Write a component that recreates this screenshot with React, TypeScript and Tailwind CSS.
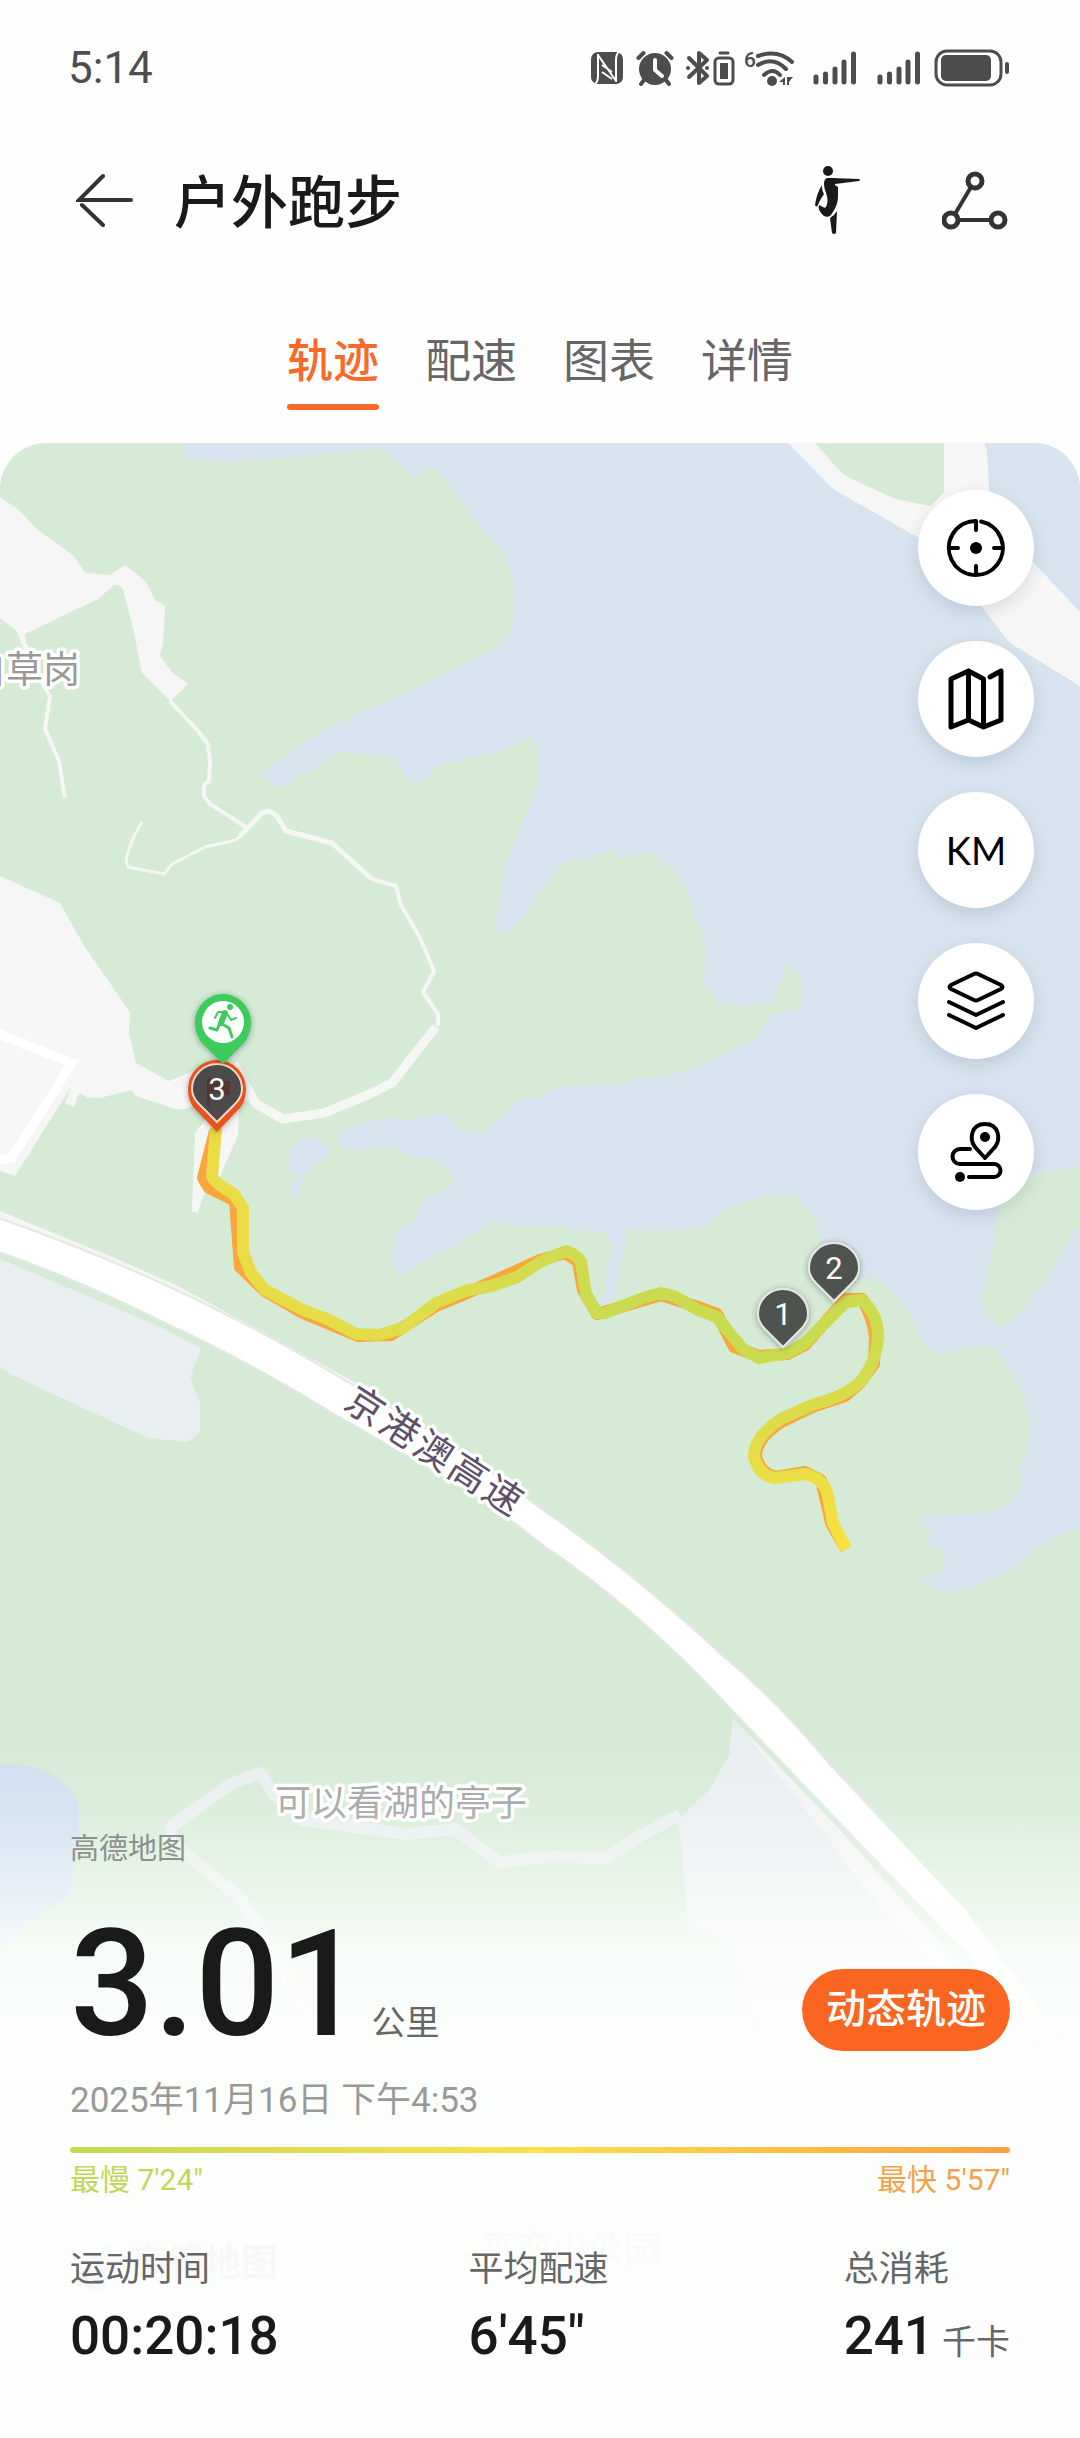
import { useState } from "react";

const tabs = ["轨迹", "配速", "图表", "详情"];

const stats = [
  { label: "运动时间", value: "00:20:18", unit: "" },
  { label: "平均配速", value: "6'45\"", unit: "" },
  { label: "总消耗", value: "241", unit: "千卡" },
];

function StatusBar() {
  return (
    <div className="flex h-12 items-center justify-between pl-[68px] pr-[70px] text-[#4d4d4d]">
      <span className="text-[44px] leading-[48px]">5:14</span>

      <div className="flex items-center">
        {/* NFC */}
        <svg className="mr-3 h-9 w-[34px]" viewBox="0 0 34 36">
          <rect x="1" y="2" width="32" height="32" rx="7" fill="currentColor" />
          <path
            d="M8 5L26 31M8 4V26Q8 32 5 34M26 32V10Q26 4 29 2"
            fill="none"
            stroke="#fff"
            strokeWidth="2"
          />
          <path d="M12 15L22 22M12 22L22 29" stroke="#fff" strokeWidth="2" />
        </svg>

        {/* Alarm */}
        <svg className="mr-3 h-9 w-[38px]" viewBox="0 0 38 36">
          <circle cx="19" cy="19" r="16" fill="currentColor" />
          <path
            d="M2.500 8l5-5M35.500 8l-5-5M8 30l-3 4M30 30l3 4"
            stroke="currentColor"
            strokeWidth="4"
            strokeLinecap="round"
          />
          <path
            d="M19 10v10l7 6"
            fill="none"
            stroke="#fff"
            strokeWidth="4"
            strokeLinecap="round"
            strokeLinejoin="round"
          />
        </svg>

        {/* Bluetooth with the headset's battery */}
        <svg className="mr-2 h-9 w-[50px]" viewBox="0 0 50 36">
          <path
            d="M3 8l18 18-8 7V3l8 7L3 27"
            fill="none"
            stroke="currentColor"
            strokeWidth="4"
            strokeLinecap="round"
            strokeLinejoin="round"
          />
          <circle cx="2" cy="18" r="2" fill="currentColor" />
          <circle cx="21" cy="18" r="2" fill="currentColor" />
          <path d="M34 3h8" stroke="currentColor" strokeWidth="3" strokeLinecap="round" />
          <rect
            x="29"
            y="8"
            width="18"
            height="26"
            rx="4"
            fill="none"
            stroke="currentColor"
            strokeWidth="3"
          />
          <rect x="34" y="13" width="8" height="16" fill="currentColor" />
        </svg>

        {/* Wi-Fi 6 */}
        <svg className="mr-4 h-9 w-[52px] overflow-visible" viewBox="0 0 52 36">
          <text x="0" y="17" fontSize="21" fontWeight="500" fill="currentColor">
            6
          </text>
          <path
            d="M14 6q20-7 34 6M14 15q15-9 28 4M20 25q9-8 16 0"
            fill="none"
            stroke="currentColor"
            strokeWidth="4"
            strokeLinecap="round"
          />
          <circle cx="28" cy="31" r="5" fill="currentColor" />
          <path d="M41 27v8h-2v-3h-4zM43 35v-8h6l-4 5v3z" fill="currentColor" />
        </svg>

        <div className="flex gap-[18px]">
          <SignalIcon />
          <SignalIcon />
        </div>

        {/* Battery */}
        <svg className="ml-3 h-[38px] w-[76px]" viewBox="0 0 76 38">
          <rect
            x="2"
            y="2"
            width="65"
            height="34"
            rx="11"
            fill="none"
            stroke="currentColor"
            strokeWidth="3"
          />
          <rect x="7" y="6" width="50" height="26" rx="5" fill="currentColor" />
          <rect x="71" y="13" width="4" height="12" rx="2" fill="currentColor" />
        </svg>
      </div>
    </div>
  );
}

function SignalIcon() {
  return (
    <svg className="h-9 w-[46px]" viewBox="0 0 46 36">
      <path
        d="M4 27v5M13.500 24v8M23 19v13M32 12v20M41.500 4v28"
        stroke="currentColor"
        strokeWidth="5"
        strokeLinecap="round"
      />
    </svg>
  );
}

function StretchIcon() {
  return (
    <svg className="h-[70px] w-12" viewBox="0 0 48 70" fill="currentColor">
      <circle cx="14" cy="6" r="5" />
      <path d="M14 13h4l27 1q2 1 0 2l-24 3v1l3 2v9c0 8-3 13-7 19-3 3-7 2-9-1-3-3-4-6-3-9l4 2c1 1 2 1 3 0 3-6 1-12-1-17-2-7-1-12 3-12z" />
      <path d="M8 20c-4 6-6 13-7 20 1 2 2 2 3 0 2-5 4-8 6-11-2-3-2-6-2-9z" />
      <path d="M23 46l-1 22q-2 2-4 0l-2-15q4-2 7-7z" />
    </svg>
  );
}

function RouteShareIcon() {
  return (
    <svg
      className="h-[60px] w-[66px]"
      viewBox="0 0 66 60"
      fill="none"
      stroke="currentColor"
      strokeWidth="5"
    >
      <circle cx="33" cy="11" r="7" />
      <circle cx="9" cy="50" r="7" />
      <circle cx="56" cy="50" r="7" />
      <path d="M29 17L13 44M16 50h33" strokeWidth="4" />
    </svg>
  );
}

/* Small number pin, tip at the bottom of the drop */
function KmPin({ x, y, label }: { x: number; y: number; label: string }) {
  return (
    <g transform={`translate(${x} ${y})`}>
      <path
        d="M0 33L-18 15C-24 9-25 4-25 0A25 25 0 0 1 25 0C25 4 24 9 18 15Z"
        fill="#505250"
        stroke="#e6e6e6"
        strokeWidth="2"
        filter="url(#pinShadow)"
      />
      <text y="11" textAnchor="middle" fontSize="31" fill="#fff">
        {label}
      </text>
    </g>
  );
}

function TrackMap() {
  return (
    <svg
      className="absolute inset-0 h-full w-full"
      viewBox="0 443 1080 1995"
      preserveAspectRatio="xMidYMin slice"
      role="img"
      aria-label="轨迹"
    >
      <defs>
        <linearGradient id="trackOut" gradientUnits="userSpaceOnUse" x1="212" y1="0" x2="870" y2="0">
          <stop offset="0" stopColor="#ebdc44" />
          <stop offset="0.35" stopColor="#dedc4c" />
          <stop offset="0.6" stopColor="#cbdb50" />
          <stop offset="1" stopColor="#cbdb50" />
        </linearGradient>
        <linearGradient id="trackEnd" gradientUnits="userSpaceOnUse" x1="0" y1="1300" x2="0" y2="1549">
          <stop offset="0" stopColor="#cbdb50" />
          <stop offset="0.45" stopColor="#dcdb4a" />
          <stop offset="1" stopColor="#fbe040" />
        </linearGradient>
        <linearGradient id="fade" gradientUnits="userSpaceOnUse" x1="0" y1="1740" x2="0" y2="2438">
          <stop offset="0" stopColor="#fdfffd" stopOpacity="0" />
          <stop offset="0.1" stopColor="#fdfffd" stopOpacity="0.15" />
          <stop offset="0.2" stopColor="#fdfffd" stopOpacity="0.48" />
          <stop offset="0.3" stopColor="#fdfffd" stopOpacity="0.82" />
          <stop offset="0.4" stopColor="#fdfffd" stopOpacity="0.93" />
          <stop offset="0.9" stopColor="#fefefe" stopOpacity="0.97" />
          <stop offset="1" stopColor="#fefefe" stopOpacity="1" />
        </linearGradient>
        <filter id="pinShadow" x="-30%" y="-30%" width="160%" height="160%">
          <feDropShadow dx="0" dy="1" stdDeviation="3" floodOpacity="0.35" />
        </filter>
      </defs>

      <rect y="443" width="1080" height="1995" fill="#d5ebd6" />

      {/* Lake */}
      <path
        fill="#d7e3ee"
        d="M183 443V457L220 462L248 461L310 456L377 448L387 453L415 479Q424 466 430 466Q438 470 448 482L475 521L501 549L507 562Q514 580 514 600L512 629L494 649L465 664L406 693L362 712L339 722L300 745L286 758L267 767L263 777L272 784L289 787L294 778L310 771L332 755L343 752L393 757L399 763L406 779L415 783L425 780L437 766L461 760L499 752L530 737L537 746L538 777L534 796L520 827L506 865L499 899L495 932L508 931L520 922L540 894L554 872L566 861L585 859L614 850L619 858L648 853Q668 860 688 890L692 909L705 941L706 957L703 980L719 1004L750 1006L772 1001Q784 980 786 964L802 975V1008L772 1014L755 1040L726 1053L695 1067L671 1075L640 1078L626 1084L557 1087L540 1097L520 1099L506 1112L482 1133L461 1130L455 1124L446 1112L410 1120L386 1118L355 1125L343 1131L336 1140L344 1149L362 1150L393 1146L417 1158L434 1160L453 1177L449 1189L437 1192L420 1202L415 1221L398 1229L391 1256L399 1277L441 1252L458 1247L463 1239L492 1223L540 1227L557 1225L580 1231L605 1232L612 1243L611 1253L607 1268L605 1294L598 1300L605 1306L616 1294L619 1268L626 1245L625 1227L631 1231L667 1231L705 1228L719 1213L736 1204L764 1196L791 1195L798 1198L815 1219L821 1241L836 1274L864 1277L881 1282L902 1302L915 1325Q922 1350 939 1354L967 1347L991 1346L998 1351L1022 1392L1031 1421L1027 1455L1019 1470L1022 1486L1008 1504L988 1511L953 1515H922V1525L931 1532L924 1547H939L946 1560L941 1572L917 1581L946 1592L974 1588L1015 1568L1032 1551L1063 1533L1080 1530V443Z"
      />
      <path
        fill="#d7e3ee"
        d="M300 1139L317 1137L332 1152L305 1175L298 1196H292L291 1187L298 1175L289 1169V1152Z"
      />
      <path
        fill="#d5ebd6"
        d="M1000 1205L1032 1174L1080 1166V1223L1057 1262L1022 1311L1001 1328L988 1317L981 1302L991 1258Z"
      />

      {/* Bare land */}
      <g fill="#f7f6f6">
        <path d="M788 443L833 489L919 538L981 606L1010 643L1080 686V612L1033 562L989 490L987 451L984 443Z" />
        <path d="M0 497L19 510L38 530L74 556L85 573L110 575L125 565L145 581L155 600L165 606L163 643L160 656L172 672L188 684L179 693L170 701L142 673L133 628L123 589L119 585H114L98 599L25 634L27 650H24L17 631L0 618Z" />
        <path d="M0 876L60 903L86 949L130 1012L129 1032L136 1063L169 1081L196 1070L230 1066L250 1100L191 1107L179 1110L136 1096L131 1090L100 1098H88L79 1093L74 1107L65 1103L71 1087L15 1176L0 1171Z" />
        <path d="M207 1118L195 1133L192 1212H198L203 1196L219 1179L238 1135L239 1106Z" />
      </g>
      <path fill="#d5ebd6" d="M815 443L838 469L846 476L895 499L931 506L944 492V443Z" />
      <path d="M-4 1033L72 1063L12 1158L-4 1160" fill="none" stroke="#fff" strokeWidth="9" />

      {/* Footpaths */}
      <g fill="none" stroke="#f5f7f5" strokeWidth="4" strokeLinejoin="round">
        <path d="M26 645L43 685L50 696L45 729L59 761L65 798" />
        <path d="M170 701L198 731L208 744L210 761L209 781L204 785V796L210 804L246 827" />
        <path strokeWidth="3" d="M142 822L133 838L126 858L128 867L164 874L172 864L205 847L236 840L248 828" />
        <path strokeWidth="5" d="M240 836L262 813L269 811L277 816L286 831L332 843L372 879" />
        <path d="M372 879L396 886L401 905L420 938L434 971L423 992L438 1014V1026" />
        <path strokeWidth="9" d="M436 1027L424 1042L392 1083L370 1094L324 1113L283 1119L256 1104L234 1064" />
      </g>

      {/* Land by the motorway */}
      <path
        fill="#e9eff0"
        d="M0 1259L158 1326L201 1348L190 1378L200 1403V1432L188 1442L148 1438L10 1374L0 1366Z"
      />
      <path
        fill="#e9eef1"
        d="M733 1718L729 1756L709 1790L678 1820L682 1850L688 1924L735 1950L760 2040L1080 2280V2120L964 1970L840 1830Z"
      />
      <path fill="#f3f3f3" d="M742 1728L778 1775L881 1908L1000 2040L964 1970L840 1830Z" />
      <path
        d="M330 2060L275 1952L241 1899L169 1840L172 1826L231 1784L260 1773L275 1795L303 1820L406 1834L455 1829L499 1862L551 1857L606 1858L640 1836L680 1815"
        fill="none"
        stroke="#e8efee"
        strokeWidth="12"
        strokeLinejoin="round"
      />
      <path
        fill="#cfdff0"
        d="M0 1764Q30 1764 41 1770Q72 1780 79 1806V1840L69 1896L28 1924L0 1952Z"
      />

      {/* Motorway */}
      <path fill="#f5f5f4" d="M0 1211L117 1259L176 1285L358 1384V1392L176 1296L0 1224Z" />
      <path
        fill="#fff"
        stroke="#e4e7e4"
        strokeWidth="2"
        d="M-4 1217Q90 1250 176 1290T358 1388Q450 1440 540 1508Q630 1570 723 1656Q776 1700 826 1760Q900 1840 964 1907L1026 1991L1090 2080V2110L964 1952L840 1823L730 1708Q640 1610 540 1543Q500 1510 451 1481L331 1412Q250 1362 165 1323Q80 1280 -4 1251Z"
      />

      {/* Place names */}
      <g stroke="#fff" strokeWidth="7" strokeLinejoin="round" paintOrder="stroke">
        <text x="-31" y="683" fontSize="37" fill="#999">
          白草岗
        </text>
        <text x="275" y="1816" fontSize="36" fill="#a0a0a0">
          可以看湖的亭子
        </text>
        <text
          transform="translate(342 1407) rotate(33)"
          x="0 41 82 123 164"
          fontSize="38"
          fill="#5d5068"
        >
          京港澳高速
        </text>
      </g>
      <path d="M74 2276L112 2240L106 2290Q84 2296 74 2276Z" fill="#4a9af0" />
      <text x="130" y="2276" fontSize="37" fontWeight="700" fill="#555">
        高德地图
      </text>
      <text x="480" y="2262" fontSize="36" fill="#888">
        平峦山公园
      </text>

      {/* Track: first lap below, way back on top */}
      <g fill="none" strokeWidth="12" strokeLinejoin="round">
        <path
          stroke="#f9a63c"
          d="M215 1131L203 1178L209 1188L235 1201L240 1267L265 1291L303 1313L358 1336L391 1335L436 1306L465 1294L540 1260L566 1253L578 1262L583 1290L597 1314L661 1295L698 1307L717 1314L734 1347L759 1356L788 1354L805 1345L846 1299L862 1299Q873 1318 875 1337L874 1364L859 1384L845 1396L812 1407L783 1421Q756 1438 756 1456Q760 1474 776 1477L805 1472L821 1480L831 1523L846 1549"
        />
        <path
          stroke="url(#trackOut)"
          d="M216 1128L212 1176Q213 1182 234 1194L243 1208V1252L251 1273L265 1290L303 1310L327 1319L356 1334L379 1335L403 1328L436 1303L465 1291L492 1286L517 1277L540 1262L566 1251Q576 1254 581 1262L586 1294L597 1313H605L643 1298L661 1293L674 1296L698 1310L717 1317L728 1331L743 1349L759 1358L788 1353L805 1343L826 1322L846 1302L862 1300"
        />
        <path
          stroke="url(#trackEnd)"
          d="M846 1302L862 1300Q878 1314 878 1337Q876 1364 860 1382Q846 1396 812 1405L781 1419Q754 1437 754 1456Q758 1476 776 1478L805 1474Q824 1478 828 1496L833 1523L846 1549"
        />
      </g>

      {/* Finish pin under the third kilometre */}
      <path
        d="M217 1132L196 1110C190 1104 188 1096 188 1089A29 29 0 0 1 246 1089C246 1096 244 1104 238 1110Z"
        fill="#e8521a"
        filter="url(#pinShadow)"
      />
      <path
        d="M217 1122L199 1104C193 1098 192 1093 192 1089A25 25 0 0 1 242 1089C242 1093 241 1098 235 1104Z"
        fill="#4d4b4a"
        stroke="#f6d9cd"
        strokeWidth="2"
      />
      <path d="M207 1078h8l4 3h11v14h-9l-4-3h-7v14h-3z" fill="#51352e" />
      <text x="217" y="1100" textAnchor="middle" fontSize="31" fill="#fff">
        3
      </text>

      {/* Start pin */}
      <g filter="url(#pinShadow)">
        <path
          d="M223 1064L202 1043C197 1037 195 1029 195 1022A28 28 0 0 1 251 1022C251 1029 249 1037 244 1043Z"
          fill="#3ecb5c"
        />
      </g>
      <circle cx="223" cy="1022" r="21" fill="#fff" />
      <g fill="none" stroke="#3ecb5c" strokeLinecap="round" strokeLinejoin="round">
        <circle cx="230" cy="1007" r="3" fill="#3ecb5c" stroke="none" />
        <path d="M225 1013L221 1023" strokeWidth="6" />
        <path d="M225 1012L218 1012L215 1018M228 1015L231 1020L236 1018" strokeWidth="2" />
        <path d="M222 1024L229 1028L232 1037M219 1025L217 1030L210 1028" strokeWidth="3" />
      </g>

      <KmPin x={834} y={1268} label="2" />
      <KmPin x={783} y={1314} label="1" />

      <rect y="1740" width="1080" height="698" fill="url(#fade)" />
    </svg>
  );
}

const mapTools = [
  {
    name: "定位",
    icon: (
      <>
        <path d="M37 5.500A27 27 0 1 1 32 5V14M5 32h9M50 32h9M32 59v-9" />
        <circle cx="32" cy="32" r="6" fill="currentColor" stroke="none" />
      </>
    ),
  },
  {
    name: "地图",
    icon: (
      <path
        d="M7 12L24.500 4L39.500 12V60L24.500 53L7 60ZM24.500 4V53M46 10L57 4V53L39.500 60"
        strokeWidth="5"
      />
    ),
  },
  { name: "公里标", icon: null },
  {
    name: "图层",
    icon: (
      <path d="M30 5Q32 4 34 5L57 16Q60 18 57 20L34 31Q32 32 30 31L7 20Q4 18 7 16ZM5 33L32 46L59 33M5 46L32 59L59 46" />
    ),
  },
  {
    name: "路线",
    icon: (
      <>
        <path d="M41 38L31 27C25 19 27 4 41 4S57 19 51 27ZM26 29H16A7 7 0 0 0 16 44H50A6 6 0 0 1 50 57H25" />
        <circle cx="41" cy="17" r="5" fill="currentColor" stroke="none" />
        <circle cx="16" cy="57" r="5" fill="currentColor" stroke="none" />
      </>
    ),
  },
];

export default function App() {
  const [activeTab, setActiveTab] = useState("轨迹");

  return (
    <div className="flex min-h-screen flex-col bg-[#fefefe] pt-11 font-['Roboto','Noto_Sans_CJK_SC',sans-serif]">
      <StatusBar />

      {/* Header */}
      <header className="mt-12 flex h-[120px] items-center pl-[76px] pr-[72px] text-[#1a1a1a]">
        <button aria-label="返回" className="text-[#333]">
          <svg
            className="h-[60px] w-[60px]"
            viewBox="0 0 60 60"
            fill="none"
            stroke="currentColor"
            strokeWidth="4"
            strokeLinecap="round"
          >
            <path d="M27 6L3 30H55M6 35L27 55" />
          </svg>
        </button>
        <h1 className="ml-[38px] pt-2 text-[57px] font-medium leading-[72px]">户外跑步</h1>
        <div className="ml-auto flex items-center gap-20">
          <button aria-label="拉伸">
            <StretchIcon />
          </button>
          <button aria-label="分享轨迹" className="text-[#333]">
            <RouteShareIcon />
          </button>
        </div>
      </header>

      {/* Tabs */}
      <nav className="flex justify-center gap-[46px] pb-[33px] pt-[74px]">
        {tabs.map((tab) => (
          <button
            key={tab}
            onClick={() => setActiveTab(tab)}
            className={`flex flex-col gap-4 text-[46px] leading-[54px] ${
              tab === activeTab ? "font-medium text-[#f96a2a]" : "text-[#666]"
            }`}
          >
            {tab}
            <span
              className={`h-[6px] w-full rounded-full ${
                tab === activeTab ? "bg-[#f96a2a]" : "bg-transparent"
              }`}
            />
          </button>
        ))}
      </nav>

      {/* Map with the run's summary */}
      <main className="relative flex flex-1 flex-col justify-between overflow-hidden rounded-t-[46px]">
        <TrackMap />

        <div className="relative flex flex-col items-end gap-[35px] pr-[46px] pt-[47px]">
          {mapTools.map(({ name, icon }) => (
            <button
              key={name}
              aria-label={name}
              className="flex h-[116px] w-[116px] items-center justify-center rounded-full bg-white text-black shadow-[0_6px_16px_rgba(60,80,110,0.16)]"
            >
              {icon ? (
                <svg
                  className="h-16 w-16"
                  viewBox="0 0 64 64"
                  fill="none"
                  stroke="currentColor"
                  strokeWidth="4"
                  strokeLinecap="round"
                  strokeLinejoin="round"
                >
                  {icon}
                </svg>
              ) : (
                <span className="font-['Lato',sans-serif] text-[38px]">KM</span>
              )}
            </button>
          ))}
        </div>

        <section className="relative px-[70px] pb-16 pt-12">
          <p className="text-[29px] leading-10 text-[#8a928b]">高德地图</p>

          <div className="mt-[42px] flex items-end justify-between">
            <p className="flex items-baseline gap-2 text-[#1a1a1a]">
              <span className="text-[148px] font-medium leading-[148px]">3.01</span>
              <span className="text-[34px] text-[#666]">公里</span>
            </p>
            <button className="mb-2 h-[82px] rounded-full bg-[#fb6522] px-6 text-[40px] font-medium text-white">
              动态轨迹
            </button>
          </div>

          <p className="mt-[22px] text-[35px] leading-10 text-[#999]">
            2025年11月16日 下午4:53
          </p>

          {/* Pace scale */}
          <div className="mt-[26px] h-[6px] rounded-full bg-linear-to-r from-[#c5d855] via-[#fbe04a] to-[#f9a040]" />
          <div className="mt-[9px] flex justify-between text-[30px] leading-9">
            <span className="text-[#c3d65a]">最慢 7'24"</span>
            <span className="text-[#f3a24a]">最快 5'57"</span>
          </div>

          <dl className="mt-[50px] grid grid-cols-[17fr_16fr_7fr]">
            {stats.map((s) => (
              <div key={s.label} className="whitespace-nowrap">
                <dt className="text-[35px] leading-[44px] text-[#666]">{s.label}</dt>
                <dd className="mt-3 text-[53px] font-medium leading-[64px] text-[#1a1a1a]">
                  {s.value}
                  {s.unit && (
                    <span className="ml-2 text-[34px] font-normal text-[#666]">{s.unit}</span>
                  )}
                </dd>
              </div>
            ))}
          </dl>
        </section>
      </main>
    </div>
  );
}
